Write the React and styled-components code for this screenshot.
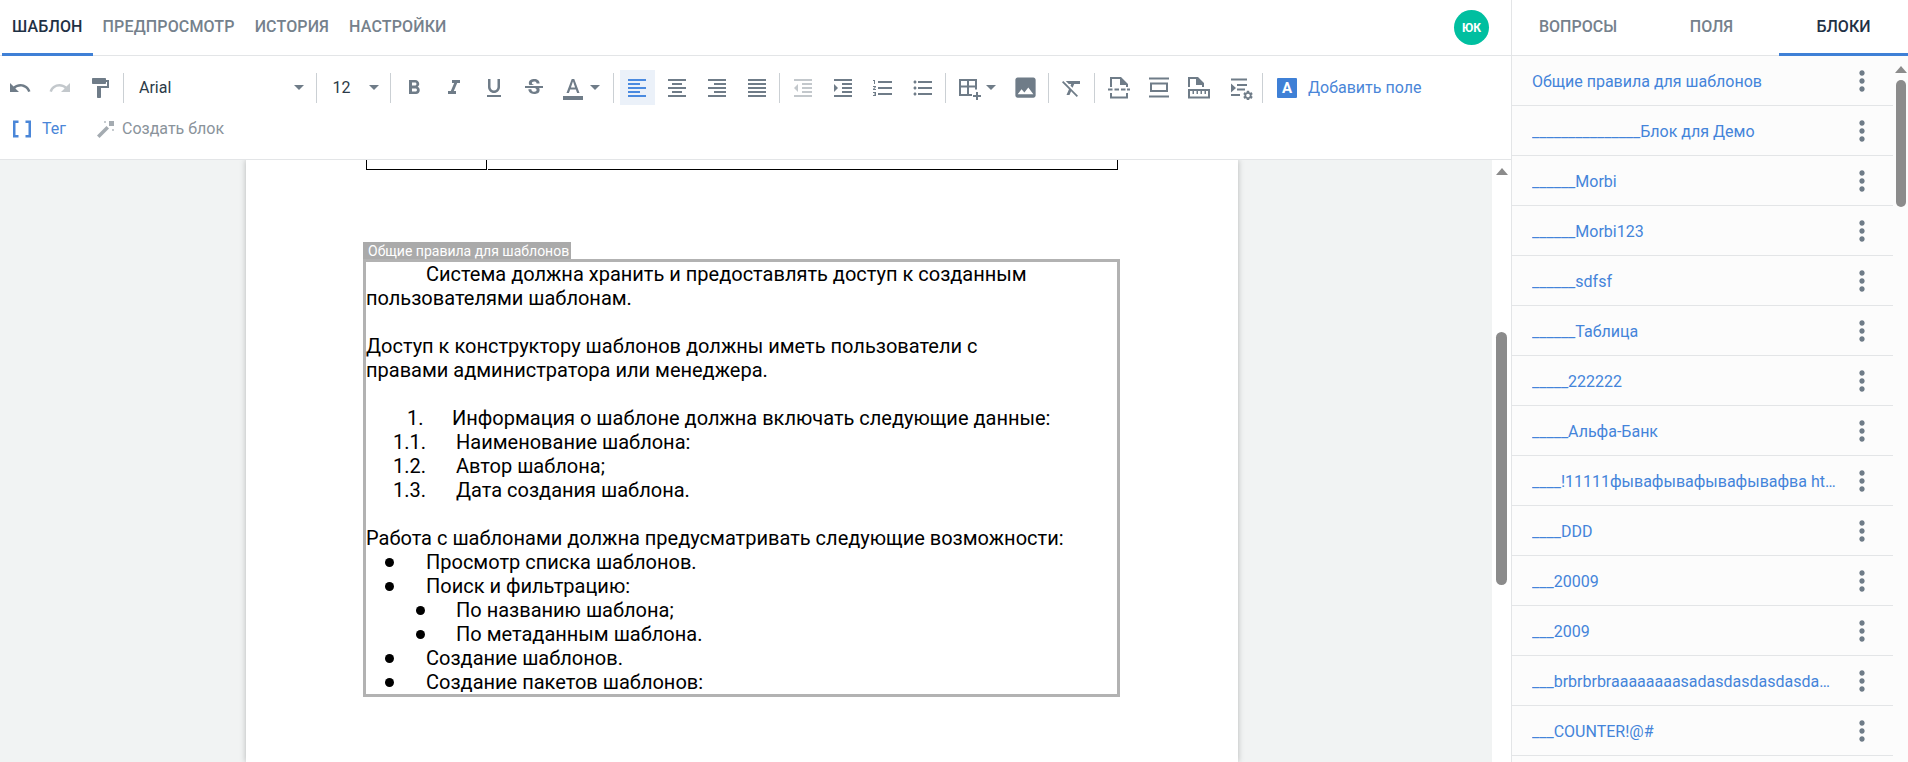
import React from "react"
import styled, { createGlobalStyle } from "styled-components"
import {
  MdUndo, MdRedo, MdFormatPaint, MdFormatBold, MdFormatItalic, MdFormatUnderlined,
  MdStrikethroughS, MdFormatColorText, MdFormatAlignLeft, MdFormatAlignCenter,
  MdFormatAlignRight, MdFormatAlignJustify, MdFormatIndentDecrease, MdFormatIndentIncrease,
  MdFormatListNumbered, MdFormatListBulleted, MdImage, MdFormatClear, MdMoreVert,
} from "react-icons/md"

const GlobalStyle = createGlobalStyle`
  html, body { margin: 0; padding: 0; height: 100%; overflow: hidden; }
  body { font-family: Roboto, "Liberation Sans", sans-serif; background: #fff; }
`

const Page = styled.div`
  display: flex;
  width: 1908px;
  height: 762px;
  overflow: hidden;
`

const Main = styled.div`
  width: 1511px;
  display: flex;
  flex-direction: column;
`

const Side = styled.aside`
  width: 397px;
  border-left: 1px solid #e3e5e7;
  box-sizing: border-box;
  display: flex;
  flex-direction: column;
  background: #fcfcfc;
`

const TabBar = styled.div`
  height: 56px;
  flex: none;
  box-sizing: border-box;
  border-bottom: 1px solid #e3e5e7;
  display: flex;
  align-items: stretch;
  padding-left: ${p => p.$left || 0}px;
  background: #fff;
`

const Tab = styled.div`
  display: flex;
  align-items: center;
  justify-content: center;
  height: 56px;
  padding: 0 10px;
  box-sizing: border-box;
  font-size: 16px;
  font-weight: 500;
  letter-spacing: 0.15px;
  text-transform: uppercase;
  color: ${p => (p.$active ? "#1f3145" : "#75818c")};
  border-bottom: 3px solid ${p => (p.$active ? "#3f80d6" : "transparent")};
`

const SideTab = styled(Tab)`
  width: ${p => p.$w}px;
  flex: none;
  padding: 0;
  letter-spacing: 0;
`

const Avatar = styled.div`
  margin: 10px 22px 0 auto;
  width: 35px;
  height: 35px;
  border-radius: 50%;
  background: #00bfa0;
  color: #fff;
  font-size: 12px;
  font-weight: 700;
  display: flex;
  align-items: center;
  justify-content: center;
`

const Toolbar = styled.div`
  height: 104px;
  flex: none;
  box-sizing: border-box;
  border-bottom: 1px solid #e3e5e7;
  background: #fff;
  display: flex;
  flex-direction: column;
`

const ToolRow = styled.div`
  display: flex;
  align-items: center;
  height: 35px;
  margin-top: ${p => p.$top}px;
`

const Tool = styled.div`
  width: 40px;
  height: 35px;
  flex: none;
  position: relative;
  display: flex;
  align-items: center;
  justify-content: center;
  color: ${p => (p.$off ? "#c3c8cc" : "#6f7c88")};
  font-size: ${p => p.$size || 24}px;
  &::before {
    content: "";
    position: absolute;
    top: 0;
    bottom: 0;
    left: 3px;
    right: 2px;
    background: ${p => (p.$active ? "#ebf1f9" : "transparent")};
  }
  svg {
    position: relative;
    flex: none;
    color: ${p => (p.$active ? "#4a8ae0" : "inherit")};
  }
`

const CaretTool = styled(Tool)`
  width: 57px;
  justify-content: flex-start;
  padding-left: ${p => p.$pad}px;
  box-sizing: border-box;
  gap: ${p => p.$gap}px;
  svg path { fill-opacity: 1; }
`

const Caret = styled.span`
  width: 0;
  height: 0;
  flex: none;
  border-left: 5px solid transparent;
  border-right: 5px solid transparent;
  border-top: 5px solid #6f7c88;
`

const Sep = styled.div`
  width: 1px;
  height: 30px;
  flex: none;
  margin: 0 ${p => p.$after || 2.5}px 0 2.5px;
  background: #cbd0d4;
`

const Select = styled.div`
  width: ${p => p.$w}px;
  height: 35px;
  flex: none;
  box-sizing: border-box;
  display: flex;
  align-items: center;
  justify-content: space-between;
  padding: 0 ${p => p.$right}px 0 ${p => p.$left}px;
  font-size: 16px;
  color: #2b3a48;
`

const LinkTool = styled.div`
  display: flex;
  align-items: center;
  gap: ${p => p.$gap}px;
  margin-left: ${p => p.$left}px;
  font-size: 16px;
  white-space: nowrap;
  color: ${p => (p.$muted ? "#8a939b" : "#4a86d8")};
`

const LetterBox = styled.span`
  width: 20px;
  height: 20px;
  border-radius: 1px;
  background: #3f80d6;
  color: #fff;
  font-size: 15px;
  font-weight: 700;
  display: flex;
  align-items: center;
  justify-content: center;
`

const Workspace = styled.div`
  flex: 1;
  min-height: 0;
  display: flex;
  background: #f1f3f3;
`

const Canvas = styled.div`
  width: 1492px;
  overflow: hidden;
  padding-left: 246px;
  box-sizing: border-box;
`

const Sheet = styled.div`
  width: 992px;
  height: 602px;
  background: #fff;
  box-shadow: 0 0 6px rgba(0, 0, 0, 0.25);
  padding-left: 117px;
  box-sizing: border-box;
  font-family: Roboto, "Liberation Sans", sans-serif;
  color: #000;
`

const TableEnd = styled.div`
  display: flex;
  width: 752px;
  height: 10px;
  margin-left: 3px;
  gap: 1px;
`

const TableCell = styled.div`
  box-sizing: border-box;
  width: ${p => p.$w}px;
  border: 1px solid #000;
  border-top: 0;
  border-left-width: ${p => (p.$open ? 0 : 1)}px;
`

const BlockTag = styled.div`
  margin-top: 72px;
  width: 208px;
  height: 17px;
  background: #aaa;
  color: #fff;
  font-size: 14px;
  line-height: 18px;
  padding-left: 5px;
  box-sizing: border-box;
  white-space: nowrap;
`

const Block = styled.div`
  width: 757px;
  height: 438px;
  box-sizing: border-box;
  border: 3px solid #b2b2b2;
  font-size: 20px;
`

const Line = styled.div`
  display: flex;
  align-items: center;
  white-space: nowrap;
  height: 24px;
  padding-left: ${p => p.$pad || 0}px;
`

const Marker = styled.span`
  width: ${p => p.$w}px;
  flex: none;
`

const Dot = styled.span`
  width: 9px;
  height: 9px;
  border-radius: 50%;
  background: #000;
  flex: none;
  margin-right: ${p => p.$gap}px;
`

const Track = styled.div`
  width: 19px;
  flex: none;
  background: #fff;
  display: flex;
  flex-direction: column;
  align-items: center;
  padding-top: 8px;
  box-sizing: border-box;
`

const SideTrack = styled(Track)`
  width: 15px;
  padding-top: 10px;
  background: transparent;
`

const Arrow = styled.span`
  width: 0;
  height: 0;
  flex: none;
  border-left: 6.5px solid transparent;
  border-right: 6.5px solid transparent;
  border-bottom: 7px solid #8b8b8b;
`

const Thumb = styled.div`
  width: ${p => p.$w}px;
  height: ${p => p.$h}px;
  flex: none;
  margin-top: ${p => p.$top}px;
  border-radius: 6px;
  background: #8b8b8b;
`

const SideBody = styled.div`
  flex: 1;
  min-height: 0;
  display: flex;
`

const List = styled.div`
  flex: 1;
  min-width: 0;
`

const Row = styled.div`
  height: 50px;
  box-sizing: border-box;
  border-bottom: 1px solid #e3e5e7;
  display: flex;
  align-items: center;
  padding: 1px 15px 0 20px;
  color: #4484da;
  font-size: 16px;
`

const RowName = styled.span`
  flex: 1;
  min-width: 0;
  overflow: hidden;
  white-space: nowrap;
  text-overflow: ellipsis;
`

const RowMenu = styled.span`
  flex: none;
  margin-left: 8px;
  width: 32px;
  display: flex;
  justify-content: center;
  color: #6f7c88;
  font-size: 32px;
`

const TableAdd = () => (
  <svg width="24" height="24" viewBox="0 0 24 24" fill="#6f7c88">
    <path d="M1 3h18v10.500h-2V11.500h-6V18h3v2H1V3zm2 2v4.500h6V5H3zm8 0v4.500h6V5h-6zM3 11.500V18h6v-6.500H3z" />
    <path d="M18 16h2v3h3v2h-3v3h-2v-3h-3v-2h3z" />
  </svg>
)

const Brackets = () => (
  <svg width="18" height="18" viewBox="0 0 18 18" fill="#4a86d8">
    <path d="M0 .5h5.500v2.500H2.500v12h3v2.500H0zM18 .5h-5.500v2.500h3v12h-3v2.500H18z" />
  </svg>
)

const Wand = () => (
  <svg width="18" height="18" viewBox="0 0 18 18" fill="#a4abb1">
    <path d="M0 15.500L9.500 6l2.500 2.500L2.500 18z" />
    <path d="M12 1h5v5h-5z" />
    <path d="M7 1h2v2H7zM15 9h2v2h-2z" fill="#c6cbcf" />
  </svg>
)

const PageBreak = () => (
  <svg width="24" height="24" viewBox="0 0 24 24" fill="#6f7c88">
    <path d="M3 1h11l7 7v3h-2V9h-6V3H5v8H3z" />
    <path d="M1 12.500h4.500v2H1zM7.500 12.500H12v2H7.500zM14 12.500h4.500v2H14zM20 12.500h3v2h-3z" />
    <path d="M3 17h2v3.500h14V17h2v5.500H3z" />
  </svg>
)

const BlockBreak = () => (
  <svg width="24" height="24" viewBox="0 0 24 24" fill="#6f7c88">
    <path d="M2 1.500h20v2H2zM2 19.500h20v2H2zM3 6.500h18V16H3zm2 2V14h14V8.500z" />
  </svg>
)

const PageRuler = () => (
  <svg width="24" height="24" viewBox="0 0 24 24" fill="#6f7c88">
    <path d="M1 1h10l6 6v4h-2V9h-6V3H3v8H1z" />
    <path d="M1 13h22v9.500H1zm2 2v5.500h18V15h-2v3h-1.500v-3H15v3h-1.500v-3H11v3H9.500v-3H7v3H5.500v-3z" />
  </svg>
)

const SectionGear = () => (
  <svg width="32" height="24" viewBox="0 0 32 24" fill="#6f7c88">
    <path d="M8 2.500h16v2H8zM14 8h10v2H14zM8 7.500l5 4.500-5 4.500zM14 12.500h8v2h-8zM8 18h9v2H8z" />
    <path
      transform="translate(19 13.500) scale(.5)"
      d="M19.140 12.940c.04-.3.06-.61.06-.94 0-.32-.02-.64-.07-.94l2.030-1.580c.18-.14.23-.41.12-.61l-1.920-3.320c-.12-.22-.37-.29-.59-.22l-2.390.96c-.5-.38-1.030-.7-1.620-.94l-.36-2.540c-.04-.24-.24-.41-.48-.41h-3.840c-.24 0-.43.17-.47.41l-.36 2.540c-.59.24-1.130.57-1.620.94l-2.390-.96c-.22-.08-.47 0-.59.22L2.740 8.870c-.12.21-.08.47.12.61l2.030 1.580c-.05.3-.09.63-.09.94s.02.64.07.94l-2.030 1.580c-.18.14-.23.41-.12.61l1.920 3.320c.12.22.37.29.59.22l2.390-.96c.5.38 1.030.7 1.620.94l.36 2.540c.05.24.24.41.48.41h3.840c.24 0 .44-.17.47-.41l.36-2.540c.59-.24 1.130-.56 1.620-.94l2.390.96c.22.08.47 0 .59-.22l1.920-3.320c.12-.22.07-.47-.12-.61l-2.010-1.580zM12 15.600c-1.980 0-3.600-1.620-3.600-3.600s1.620-3.600 3.600-3.600 3.600 1.620 3.600 3.600-1.620 3.600-3.600 3.600z"
    />
  </svg>
)

const blocks = [
  "Общие правила для шаблонов",
  "_______________Блок для Демо",
  "______Morbi",
  "______Morbi123",
  "______sdfsf",
  "______Таблица",
  "_____222222",
  "_____Альфа-Банк",
  "____!11111фывафывафывафывафва htpp://example",
  "____DDD",
  "___20009",
  "___2009",
  "___brbrbrbraaaaaaaasadasdasdasdasdasdasdasd",
  "___COUNTER!@#",
  "",
]

export default function App() {
  return (
    <Page>
      <GlobalStyle />
      <Main>
        <TabBar $left={2}>
          <Tab $active>Шаблон</Tab>
          <Tab>Предпросмотр</Tab>
          <Tab>История</Tab>
          <Tab>Настройки</Tab>
          <Avatar>ЮК</Avatar>
        </TabBar>
        <Toolbar>
          <ToolRow $top={14}>
            <Tool><MdUndo /></Tool>
            <Tool $off><MdRedo /></Tool>
            <Tool><MdFormatPaint /></Tool>
            <Sep />
            <Select $w={187.5} $left={13} $right={10}>Arial<Caret /></Select>
            <Sep />
            <Select $w={68} $left={13} $right={9}>12<Caret /></Select>
            <Sep />
            <Tool><MdFormatBold /></Tool>
            <Tool><MdFormatItalic /></Tool>
            <Tool><MdFormatUnderlined /></Tool>
            <Tool><MdStrikethroughS /></Tool>
            <CaretTool $pad={7} $gap={5}><MdFormatColorText /><Caret /></CaretTool>
            <Sep />
            <Tool $active><MdFormatAlignLeft /></Tool>
            <Tool><MdFormatAlignCenter /></Tool>
            <Tool><MdFormatAlignRight /></Tool>
            <Tool><MdFormatAlignJustify /></Tool>
            <Sep />
            <Tool $off><MdFormatIndentDecrease /></Tool>
            <Tool><MdFormatIndentIncrease /></Tool>
            <Tool><MdFormatListNumbered /></Tool>
            <Tool><MdFormatListBulleted /></Tool>
            <Sep />
            <CaretTool $pad={9} $gap={4}><TableAdd /><Caret /></CaretTool>
            <Tool $size={27}><MdImage /></Tool>
            <Sep />
            <Tool><MdFormatClear /></Tool>
            <Sep $after={4} />
            <Tool><PageBreak /></Tool>
            <Tool><BlockBreak /></Tool>
            <Tool><PageRuler /></Tool>
            <Tool><SectionGear /></Tool>
            <Sep />
            <LinkTool $left={12} $gap={11}><LetterBox>A</LetterBox>Добавить поле</LinkTool>
          </ToolRow>
          <ToolRow $top={6}>
            <LinkTool $left={13} $gap={11}><Brackets />Тег</LinkTool>
            <LinkTool $left={31} $gap={7} $muted><Wand />Создать блок</LinkTool>
          </ToolRow>
        </Toolbar>
        <Workspace>
          <Canvas>
            <Sheet>
              <TableEnd>
                <TableCell $w={121} />
                <TableCell $w={630} $open />
              </TableEnd>
              <BlockTag>Общие правила для шаблонов</BlockTag>
              <Block>
                <Line $pad={60}>Система должна хранить и предоставлять доступ к созданным</Line>
                <Line>пользователями шаблонам.</Line>
                <Line />
                <Line>Доступ к конструктору шаблонов должны иметь пользователи с</Line>
                <Line>правами администратора или менеджера.</Line>
                <Line />
                <Line $pad={41}><Marker $w={45}>1.</Marker>Информация о шаблоне должна включать следующие данные:</Line>
                <Line $pad={27}><Marker $w={63}>1.1.</Marker>Наименование шаблона:</Line>
                <Line $pad={27}><Marker $w={63}>1.2.</Marker>Автор шаблона;</Line>
                <Line $pad={27}><Marker $w={63}>1.3.</Marker>Дата создания шаблона.</Line>
                <Line />
                <Line>Работа с шаблонами должна предусматривать следующие возможности:</Line>
                <Line $pad={19}><Dot $gap={32} />Просмотр списка шаблонов.</Line>
                <Line $pad={19}><Dot $gap={32} />Поиск и фильтрацию:</Line>
                <Line $pad={50}><Dot $gap={31} />По названию шаблона;</Line>
                <Line $pad={50}><Dot $gap={31} />По метаданным шаблона.</Line>
                <Line $pad={19}><Dot $gap={32} />Создание шаблонов.</Line>
                <Line $pad={19}><Dot $gap={32} />Создание пакетов шаблонов:</Line>
              </Block>
            </Sheet>
          </Canvas>
          <Track>
            <Arrow />
            <Thumb $w={11} $h={253} $top={157} />
          </Track>
        </Workspace>
      </Main>
      <Side>
        <TabBar>
          <SideTab $w={132}>Вопросы</SideTab>
          <SideTab $w={135}>Поля</SideTab>
          <SideTab $w={129} $active>Блоки</SideTab>
        </TabBar>
        <SideBody>
          <List>
            {blocks.map((name, i) => (
              <Row key={i}>
                <RowName>{name}</RowName>
                <RowMenu><MdMoreVert /></RowMenu>
              </Row>
            ))}
          </List>
          <SideTrack>
            <Arrow />
            <Thumb $w={10} $h={127} $top={7} />
          </SideTrack>
        </SideBody>
      </Side>
    </Page>
  )
}
